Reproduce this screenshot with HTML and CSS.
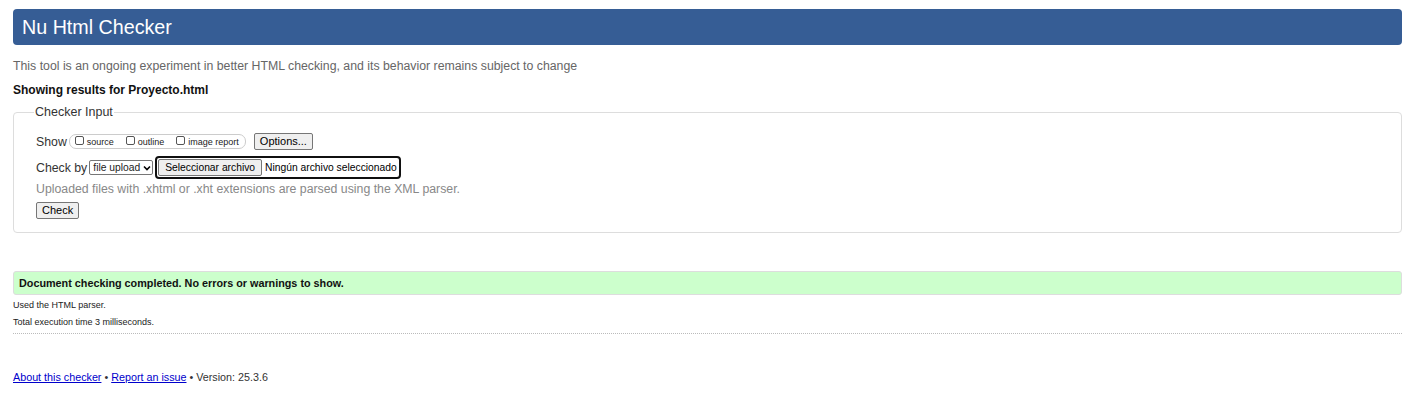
FILE: index.html
```html
<!DOCTYPE html>
<html lang="en">
<head>
<meta charset="utf-8">
<title>Showing results for Proyecto.html - Nu Html Checker</title>
<link rel="stylesheet" href="styles.css">
</head>
<body>
<h1 class="masthead">Nu Html Checker</h1>
<p class="intro">This tool is an ongoing experiment in better HTML checking, and its behavior remains subject to change</p>
<p class="showing">Showing results for Proyecto.html</p>
<form class="checker-form">
  <fieldset class="checker-input">
    <legend class="legend">Checker Input</legend>
    <div class="row show-row">
      <span class="label">Show</span>
      <span class="show-options">
        <label class="opt"><span class="cb"></span>source</label>
        <label class="opt"><span class="cb"></span>outline</label>
        <label class="opt"><span class="cb"></span>image report</label>
      </span>
      <span class="btn options-btn">Options...</span>
    </div>
    <div class="row checkby-row">
      <span class="label">Check by</span>
      <span class="select">file upload<svg class="chev" width="8" height="6" viewBox="0 0 8 6"><path d="M1 1.5 L4 4.5 L7 1.5" fill="none" stroke="#000" stroke-width="1.6"/></svg></span>
      <span class="file-input"><span class="btn file-btn">Seleccionar archivo</span><span class="file-name">Ningún archivo seleccionado</span></span>
    </div>
    <p class="hint">Uploaded files with .xhtml or .xht extensions are parsed using the XML parser.</p>
    <div class="row"><span class="btn check-btn">Check</span></div>
  </fieldset>
</form>
<div class="success">Document checking completed. No errors or warnings to show.</div>
<p class="small">Used the HTML parser.</p>
<p class="small">Total execution time 3 milliseconds.</p>
<hr class="sep">
<p class="footer"><a href="#">About this checker</a> • <a href="#">Report an issue</a> • Version: 25.3.6</p>
</body>
</html>
```
FILE: styles.css
```css
html, body { margin: 0; padding: 0; background: #fff; }
body {
  font-family: "Liberation Sans", Arial, sans-serif;
  color: #222;
  padding: 9px 3px 0 13px;
}
.masthead {
  margin: 0;
  height: 36px;
  background: #365d95;
  border-radius: 4px;
  color: #fff;
  font-weight: normal;
  font-size: 19.7px;
  line-height: 36px;
  padding-left: 9px;
}
.intro {
  margin: 14px 0 0;
  font-size: 12.3px;
  color: #666;
  line-height: 15px;
}
.showing {
  margin: 9px 0 0;
  font-size: 12px;
  font-weight: bold;
  color: #111;
  line-height: 14px;
}
.checker-form { margin: 8px 0 0; }
.checker-input {
  margin: 0;
  border: 1px solid #ddd;
  border-radius: 4px;
  padding: 8px 22px 13px;
  box-sizing: border-box;
}
.legend {
  font-size: 12.5px;
  color: #333;
  padding: 0 1px;
  margin-left: -2px;
}
.row { display: flex; align-items: center; }
.show-row { margin-top: 6px; }
.label { font-size: 12.3px; color: #333; }
.show-options {
  margin-left: 2px;
  border: 1px solid #ccc;
  border-radius: 7px;
  display: inline-flex;
  align-items: center;
  padding: 0 6px 0 5px;
  height: 13px;
  gap: 12px;
}
.opt {
  display: inline-flex;
  align-items: center;
  font-size: 9px;
  color: #222;
}
.cb {
  width: 9px; height: 9px;
  border: 1px solid #555;
  border-radius: 2px;
  margin-right: 3px;
  box-sizing: border-box;
  display: inline-block;
  margin-top: -2px;
}
.btn {
  display: inline-block;
  background: #efefef;
  border: 1px solid #767676;
  border-radius: 2px;
  font-size: 11px;
  color: #000;
  padding: 1px 6px;
  line-height: 13px;
}
.options-btn { margin-left: 8px; padding: 1px 5px; }
.checkby-row { margin-top: 6px; }
.select {
  margin-left: 2px;
  display: inline-flex;
  align-items: center;
  font-size: 10.3px;
  border: 1px solid #767676;
  border-radius: 2px;
  padding: 1px 1px 1px 3px;
  line-height: 11px;
  gap: 3px;
}
.file-input {
  margin-left: 2px;
  display: inline-flex;
  align-items: center;
  border: 2px solid #101010;
  border-radius: 4px;
  padding: 1px 2px 1px 1px;
  font-size: 10.3px;
}
.file-btn { font-size: 10.3px; padding: 1px 6px; }
.file-name { margin-left: 3px; color: #000; }
.hint {
  margin: 3px 0 0;
  font-size: 12.3px;
  color: #888;
  line-height: 15px;
}
.check-btn { margin-top: 5px; padding: 1px 5px; }
.success {
  margin-top: 38px;
  background: #ccffcc;
  border: 1px solid #ddd;
  border-radius: 3px;
  font-weight: bold;
  font-size: 10.8px;
  color: #111;
  padding: 5px 5px;
  line-height: 12px;
}
.small {
  margin: 4px 0 0;
  font-size: 9px;
  color: #222;
  line-height: 12px;
}
.small + .small { margin-top: 5px; }
.sep {
  margin: 5px 0 0;
  border: 0;
  border-top: 1px dotted #bbb;
  height: 0;
}
.footer {
  margin: 37px 0 0;
  font-size: 10.75px;
  color: #333;
}
.footer a { color: #00c; }
```
